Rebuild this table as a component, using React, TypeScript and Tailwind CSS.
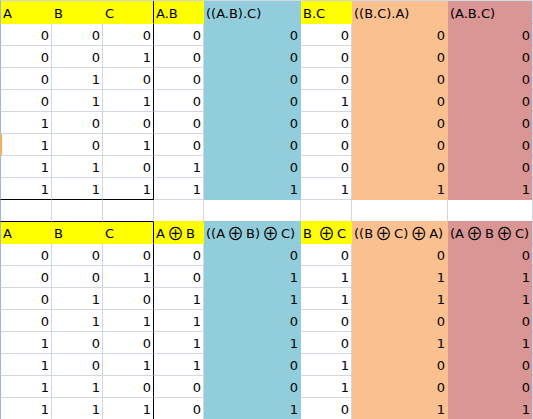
import React from "react";

type Fill = "w" | "y" | "b" | "p" | "r";

const bgClass: Record<Fill, string> = {
  w: "bg-white",
  y: "bg-[#ffff00]",
  b: "bg-[#92cddc]",
  p: "bg-[#fac090]",
  r: "bg-[#d99694]",
};

// right edge colour: filled cells hide the gridline, pink shows it
const rightClass: Record<string, string> = {
  grid: "border-r-[#d0d7e5]",
  black: "border-r-black",
  y: "border-r-[#ffff00]",
  b: "border-r-[#92cddc]",
  p: "border-r-[#fac090]",
};

const bottomClass: Record<string, string> = {
  grid: "border-b-[#d0d7e5]",
  black: "border-b-black",
  y: "border-b-[#ffff00]",
  b: "border-b-[#92cddc]",
  p: "border-b-[#fac090]",
  r: "border-b-[#d99694]",
};

const headerFills: Fill[] = ["y", "y", "y", "y", "b", "y", "p", "r"];
const dataFills: Fill[] = ["w", "w", "w", "w", "b", "w", "p", "r"];

const andHeader = ["A", "B", "C", "A.B", "((A.B).C)", "B.C", "((B.C).A)", "(A.B.C)"];
const xorHeader = ["A", "B", "C", "A⊕B", "((A⊕B)⊕C)", "B ⊕C", "((B⊕C)⊕A)", "(A⊕B⊕C)"];

const andRows = [
  [0, 0, 0, 0, 0, 0, 0, 0],
  [0, 0, 1, 0, 0, 0, 0, 0],
  [0, 1, 0, 0, 0, 0, 0, 0],
  [0, 1, 1, 0, 0, 1, 0, 0],
  [1, 0, 0, 0, 0, 0, 0, 0],
  [1, 0, 1, 0, 0, 0, 0, 0],
  [1, 1, 0, 1, 0, 0, 0, 0],
  [1, 1, 1, 1, 1, 1, 1, 1],
];

const xorRows = [
  [0, 0, 0, 0, 0, 0, 0, 0],
  [0, 0, 1, 0, 1, 1, 1, 1],
  [0, 1, 0, 1, 1, 1, 1, 1],
  [0, 1, 1, 1, 0, 0, 0, 0],
  [1, 0, 0, 1, 1, 0, 1, 1],
  [1, 0, 1, 1, 0, 1, 0, 0],
  [1, 1, 0, 0, 0, 1, 0, 0],
  [1, 1, 1, 0, 1, 0, 1, 1],
];

function rightFor(fill: Fill, col: number, boxed: boolean) {
  if (col === 2 && boxed) return "black";
  if (fill === "w" || fill === "r") return "grid";
  return fill;
}

function bottomFor(fill: Fill, col: number, blackBottom: boolean) {
  if (blackBottom && col < 3) return "black";
  if (fill === "w") return "grid";
  return fill;
}

// the xor sign is a thin, wide circle in the sheet
function Label({ text }: { text: string | number }) {
  const parts = String(text).split("⊕");
  return (
    <>
      {parts.map((p, i) => (
        <React.Fragment key={i}>
          {i > 0 && (
            <span className="mx-[2px] align-[-2px] font-['Noto_Sans_CJK_JP',sans-serif] text-[17px] leading-[0]">
              ⊕
            </span>
          )}
          {p}
        </React.Fragment>
      ))}
    </>
  );
}

type RowProps = {
  cells: (string | number)[];
  fills: Fill[];
  header?: boolean;
  boxed?: boolean;
  blackBottom?: boolean;
  tall?: boolean;
  marked?: boolean;
  bottomFills?: Fill[];
};

function Row({ cells, fills, header, boxed = true, blackBottom, tall, marked, bottomFills }: RowProps) {
  return (
    <div className={`grid grid-cols-[52px_51px_51px_50px_97px_51px_96px_85px] ${tall ? "h-[23px]" : "h-[22px]"}`}>
      {cells.map((c, i) => {
        const fill = fills[i];
        const bf = bottomFills ? bottomFills[i] : fill;
        const right = rightClass[rightFor(fill, i, boxed)];
        const bottom = bottomClass[bottomFor(bf, i, !!blackBottom)];
        const left =
          i === 0 ? (marked ? "border-l-2 border-l-[#f2b062]" : "border-l border-l-[#a3b6cc]") : "";
        return (
          <div
            key={i}
            className={`flex items-end border-r border-b pb-[2px] ${bgClass[fill]} ${right} ${bottom} ${left} ${
              header ? "justify-start pl-[2px]" : "justify-end pr-[2px]"
            }`}
          >
            <span className="whitespace-nowrap leading-[15px]">
              <Label text={c} />
            </span>
          </div>
        );
      })}
    </div>
  );
}

export default function App() {
  const empty = ["", "", "", "", "", "", "", ""];
  const white: Fill[] = ["w", "w", "w", "w", "w", "w", "w", "w"];

  return (
    <div className="w-[533px] h-[419px] overflow-hidden bg-white border-t border-t-[#d0d7e5] font-['DejaVu_Sans',sans-serif] text-[13px] text-black">
      {/* AND table */}
      <Row cells={andHeader} fills={headerFills} header tall />
      {andRows.map((r, idx) => (
        <Row
          key={"a" + idx}
          cells={r}
          fills={dataFills}
          blackBottom={idx === andRows.length - 1}
          marked={idx === 5}
        />
      ))}

      {/* spacer row */}
      <Row cells={empty} fills={white} boxed={false} blackBottom bottomFills={headerFills} />

      {/* XOR table */}
      <Row cells={xorHeader} fills={headerFills} header />
      {xorRows.map((r, idx) => (
        <Row key={"x" + idx} cells={r} fills={dataFills} />
      ))}
    </div>
  );
}
